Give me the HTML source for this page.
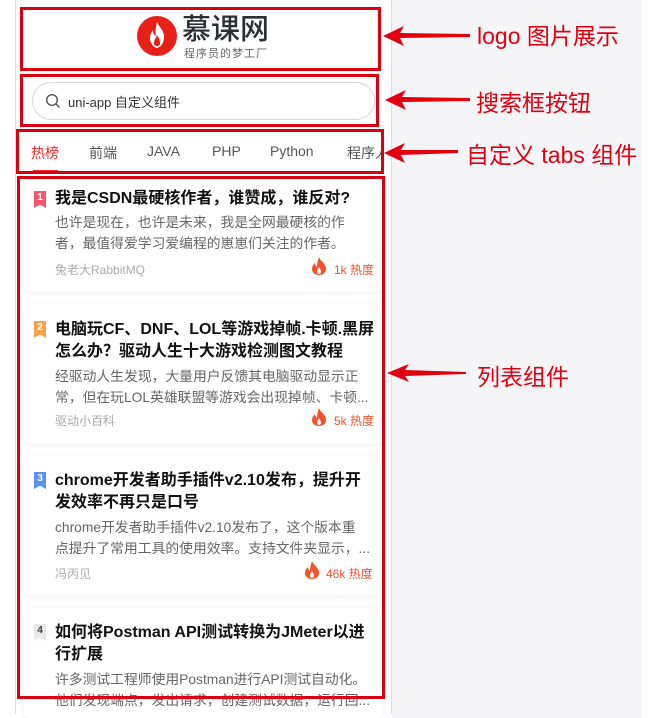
<!DOCTYPE html>
<html><head><meta charset="utf-8"><style>
*{margin:0;padding:0;box-sizing:border-box}
body{width:659px;height:718px;overflow:hidden;background:#fff;font-family:"Liberation Sans","Noto Sans CJK SC",sans-serif;position:relative}
.a{position:absolute}
.right{left:392px;top:0;width:250px;height:718px;background:#f5f5f7}
.panel{left:15px;top:0;width:377px;height:714px;background:#fff;border-left:1px solid #ddd;border-right:1px solid #ddd}
.rb{position:absolute;border:3px solid #d9000f}
.card{position:absolute;left:24px;width:359px;background:#fff;border-radius:6px;box-shadow:0 1px 5px rgba(0,0,0,.07)}
.t{position:absolute;left:55px;font-size:16px;font-weight:bold;color:#111;line-height:22px;width:322px}
.d{position:absolute;left:55px;font-size:13.8px;color:#666;line-height:21px;width:322px;white-space:nowrap;overflow:hidden}
.au{position:absolute;left:55px;font-size:12px;color:#aaa}
.rk{position:absolute;left:34px;width:12px;height:17px;color:#fff;font-size:10px;font-weight:bold;text-align:center;line-height:13px;clip-path:polygon(0 0,100% 0,100% 100%,50% 80%,0 100%)}
.lbl{position:absolute;color:#e0000f;font-size:23px;font-family:"Liberation Sans","Noto Sans CJK SC",sans-serif}
.tab{position:absolute;top:143px;font-size:14px;color:#555}
</style></head><body>
<div class="a right"></div>
<div class="a panel"></div>

<!-- logo -->
<svg class="a" style="left:136px;top:15px" width="42" height="42" viewBox="0 0 42 42"><circle cx="21" cy="21" r="20" fill="#e8201a"/><path d="M21 7c2 5 7 8 7 15 0 6-3 10-7 11-4-1-7-5-7-10 0-4 2-6 3-8 0 3 1 5 3 6-1-5 0-9 1-14z" fill="#fff"/><path d="M21 20c2 3 3 5 3 8 0 2-1 3-3 3s-3-1-3-3c0-3 2-5 3-8z" fill="#e8201a"/></svg>
<div class="a" style="left:182px;top:14px;font-size:29px;line-height:32px;color:#2a2e35;font-weight:500">慕课网</div>
<div class="a" style="left:184px;top:47px;font-size:11px;line-height:14px;color:#666;letter-spacing:1px">程序员的梦工厂</div>

<!-- search -->
<div class="a" style="left:32px;top:82px;width:343px;height:38px;border:1px solid #d6d6d6;border-radius:19px"></div>
<svg class="a" style="left:45px;top:93px" width="16" height="16" viewBox="0 0 16 16"><circle cx="7" cy="7" r="5.3" fill="none" stroke="#555" stroke-width="1.4"/><path d="M11 11l3.5 3.5" stroke="#555" stroke-width="1.4"/></svg>
<div class="a" style="left:68px;top:92px;font-size:13px;color:#333">uni-app 自定义组件</div>

<!-- tabs -->
<div class="tab" style="left:31px;color:#f02b2b">热榜</div>
<div class="a" style="left:33px;top:170px;width:25px;height:2px;background:#f02b2b"></div>
<div class="tab" style="left:89px">前端</div>
<div class="tab" style="left:147px">JAVA</div>
<div class="tab" style="left:212px">PHP</div>
<div class="tab" style="left:270px">Python</div>
<div class="tab" style="left:347px;width:35px;overflow:hidden;white-space:nowrap">程序人生</div>

<!-- cards -->
<div class="card" style="top:178px;height:114px"></div>
<div class="card" style="top:304px;height:140px"></div>
<div class="card" style="top:455px;height:140px"></div>
<div class="card" style="top:608px;height:110px"></div>

<div class="rk" style="top:191px;background:#f4566a">1</div>
<div class="t" style="top:188px;width:330px">我是CSDN最硬核作者，谁赞成，谁反对?</div>
<div class="d" style="top:212px">也许是现在，也许是未来，我是全网最硬核的作<br>者，最值得爱学习爱编程的崽崽们关注的作者。</div>
<div class="au" style="top:261px">兔老大RabbitMQ</div>

<div class="rk" style="top:321px;background:#f7a14a">2</div>
<div class="t" style="top:319px;width:325px">电脑玩CF、DNF、LOL等游戏掉帧.卡顿.黑屏怎么办？驱动人生十大游戏检测图文教程</div>
<div class="d" style="top:366px">经驱动人生发现，大量用户反馈其电脑驱动显示正<br>常，但在玩LOL英雄联盟等游戏会出现掉帧、卡顿...</div>
<div class="au" style="top:412px">驱动小百科</div>

<div class="rk" style="top:472px;background:#5b91ef">3</div>
<div class="t" style="top:470px;width:312px">chrome开发者助手插件v2.10发布，提升开发效率不再只是口号</div>
<div class="d" style="top:517px">chrome开发者助手插件v2.10发布了，这个版本重<br>点提升了常用工具的使用效率。支持文件夹显示，...</div>
<div class="au" style="top:565px">冯丙见</div>

<div class="rk" style="top:624px;background:#e8e8e8;color:#444">4</div>
<div class="t" style="top:622px">如何将Postman API测试转换为JMeter以进行扩展</div>
<div class="d" style="top:669px">许多测试工程师使用Postman进行API测试自动化。<br>他们发现端点，发出请求，创建测试数据，运行回...</div>

<!-- heat -->
<svg class="a" style="left:310px;top:256px" width="18" height="20" viewBox="0 0 18 20"><path d="M9 1c1 4 7 6 7 12 0 4-3 6-7 6s-7-2-7-6c0-3 2-5 3-6 0 2 1 3 2 4 0-4 1-7 2-10z" fill="#f4522c"/><path d="M9 11c1 2 2 3 2 5 0 1-1 2-2 2s-2-1-2-2c0-2 1-3 2-5z" fill="#fff"/></svg>
<div class="a" style="left:334px;top:261px;font-size:12px;color:#f4522c">1k 热度</div>
<svg class="a" style="left:310px;top:407px" width="18" height="20" viewBox="0 0 18 20"><path d="M9 1c1 4 7 6 7 12 0 4-3 6-7 6s-7-2-7-6c0-3 2-5 3-6 0 2 1 3 2 4 0-4 1-7 2-10z" fill="#f4522c"/><path d="M9 11c1 2 2 3 2 5 0 1-1 2-2 2s-2-1-2-2c0-2 1-3 2-5z" fill="#fff"/></svg>
<div class="a" style="left:334px;top:412px;font-size:12px;color:#f4522c">5k 热度</div>
<svg class="a" style="left:303px;top:560px" width="18" height="20" viewBox="0 0 18 20"><path d="M9 1c1 4 7 6 7 12 0 4-3 6-7 6s-7-2-7-6c0-3 2-5 3-6 0 2 1 3 2 4 0-4 1-7 2-10z" fill="#f4522c"/><path d="M9 11c1 2 2 3 2 5 0 1-1 2-2 2s-2-1-2-2c0-2 1-3 2-5z" fill="#fff"/></svg>
<div class="a" style="left:326px;top:565px;font-size:12px;color:#f4522c">46k 热度</div>

<!-- red boxes -->
<div class="rb" style="left:20px;top:7px;width:361px;height:64px"></div>
<div class="rb" style="left:20px;top:74px;width:359px;height:53px"></div>
<div class="rb" style="left:16px;top:129px;width:368px;height:45px"></div>
<div class="rb" style="left:17px;top:176px;width:368px;height:523px"></div>

<!-- arrows -->
<svg class="a" style="left:378px;top:0" width="100" height="400" viewBox="0 0 100 400">
<g fill="#e0000f">
<path d="M5 36 L26 26 L22 33 L92 34 L92 37 L22 38 L26 46z"/>
<path d="M7 100 L28 90 L24 97 L92 98 L92 101 L24 102 L28 110z"/>
<path d="M6 153 L27 143 L23 150 L80 150 L80 153 L23 155 L27 163z"/>
<path d="M9 373 L31 364 L27 370 L88 372 L88 374 L27 376 L31 382z"/>
</g></svg>
<div class="lbl" style="left:477px;top:17px">logo 图片展示</div>
<div class="lbl" style="left:476px;top:84px">搜索框按钮</div>
<div class="lbl" style="left:466px;top:136px">自定义 tabs 组件</div>
<div class="lbl" style="left:477px;top:358px">列表组件</div>
</body></html>
